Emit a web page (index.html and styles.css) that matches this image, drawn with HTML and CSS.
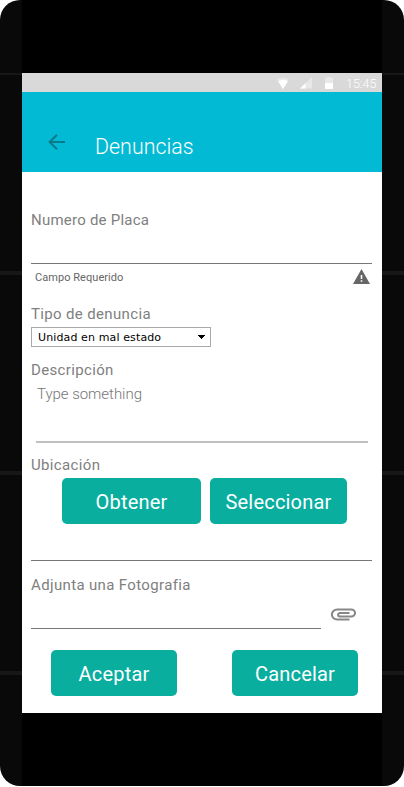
FILE: index.html
```html
<!DOCTYPE html>
<html lang="es">
<head>
<meta charset="utf-8">
<title>Denuncias</title>
<link rel="stylesheet" href="styles.css">
</head>
<body>
<div class="phone">
  <main class="screen">
    <div class="status">
      <svg class="wifi" width="12" height="12" viewBox="0 0 12 12"><path fill="#e8e8e8" d="M0 2.5Q6-1.2 12 2.5L6 12Z"/><path fill="#fff" d="M1.2 4.2Q6 1.8 10.8 4.2L6 12Z"/></svg>
      <svg class="signal" width="12" height="12" viewBox="0 0 12 12"><path fill="#e8e8e8" d="M12 0V11.5H0Z"/><path fill="#fff" d="M5.5 6V11.5H0Z"/></svg>
      <svg class="battery" width="8" height="12" viewBox="0 0 8 12"><path fill="#e8e8e8" d="M0 1H2V0H6V1H8V6H0Z"/><path fill="#fff" d="M0 6H8V12H0Z"/></svg>
      <span class="time">15:45</span>
    </div>
    <header class="bar">
      <svg class="back" width="17" height="16" viewBox="0 0 17 16"><path d="M17 8H1.5M9 .8L1.6 8L9 15.2" fill="none" stroke="#087b8c" stroke-width="2"/></svg>
      <h1 class="title">Denuncias</h1>
    </header>
    <form class="form">
      <label class="label plate">Numero de Placa</label>
      <div class="line plate-line"></div>
      <div class="helper"><span>Campo Requerido</span>
        <svg width="17" height="15" viewBox="0 0 17 15"><path fill="#666" fill-rule="evenodd" d="M8.5 0L17 15H0ZM7.7 6V10H9.3V6ZM7.7 11.3V12.8H9.3V11.3Z"/></svg>
      </div>
      <label class="label type">Tipo de denuncia</label>
      <div class="select"><span>Unidad en mal estado</span>
        <svg width="7" height="4" viewBox="0 0 7 4" shape-rendering="crispEdges"><path d="M0 0H7V1H6V2H5V3H4V4H3V3H2V2H1V1H0Z"/></svg>
      </div>
      <label class="label desc">Descripción</label>
      <div class="textarea">Type something</div>
      <label class="label place">Ubicación</label>
      <div class="actions locate"><button type="button" class="btn get">Obtener</button><button type="button" class="btn pick">Seleccionar</button></div>
      <div class="line place-line"></div>
      <label class="label photo">Adjunta una Fotografia</label>
      <div class="attach"><div class="file"></div>
        <svg width="25" height="13" viewBox="0 0 25 13"><path d="M18.5 11H6.2A4.8 4.5 0 0 1 6.2 1H20.2A3.6 3.3 0 0 1 20.2 8H8.8A1.7 1.7 0 0 1 8.8 4.6H18.5" transform="translate(0 .5)" fill="none" stroke="#878787" stroke-width="2"/></svg>
      </div>
      <div class="actions submit"><button type="button" class="btn ok">Aceptar</button><button type="button" class="btn cancel">Cancelar</button></div>
    </form>
  </main>
</div>
</body>
</html>
```

FILE: styles.css
```css
* { box-sizing: border-box; }
body { margin: 0; background: #fff; font-family: Roboto, sans-serif; }
.phone {
  width: 404px; height: 786px; padding: 73px 22px; border-radius: 20px;
  background:
    linear-gradient(#000, #000) 22px 0 / 360px 786px no-repeat,
    linear-gradient(#171717, #171717) 0 73px / 404px 2px no-repeat,
    linear-gradient(#171717, #171717) 0 271px / 404px 4px no-repeat,
    linear-gradient(#171717, #171717) 0 471px / 404px 4px no-repeat,
    linear-gradient(#171717, #171717) 0 671px / 404px 4px no-repeat,
    #090909;
}
.screen { width: 360px; height: 640px; background: #fff; overflow: hidden; }
svg { display: block; flex: none; }
.status { display: flex; height: 19px; padding: 4px 5px 0 0; justify-content: flex-end; background: #d9d9d9; }
.signal { margin-left: 11px; }
.battery { margin-left: 13px; }
.time { width: 31px; margin-left: 13px; color: #fff; font-size: 12.5px; font-weight: 300; line-height: 14px; letter-spacing: 0; white-space: nowrap; }
.bar { display: flex; height: 80px; padding: 42px 0 0 26px; background: #03bad4; }
.title { margin: 0 0 0 30px; color: #fff; font-size: 21.33px; font-weight: 300; line-height: 26px; letter-spacing: .05px; }
.form { display: flex; flex-direction: column; align-items: flex-start; padding: 36px 0 0 9px; }
.label { height: 24px; color: #808080; font-size: 15px; line-height: 24px; letter-spacing: .35px; white-space: nowrap; }
.plate { letter-spacing: .23px; }
.line { width: 341px; height: 1px; background: #777; }
.plate-line { margin-top: 31px; }
.helper { display: flex; width: 341px; height: 20px; margin-top: 4px; padding: 1px 2px 0 4px; justify-content: space-between; color: #666; font-size: 11px; line-height: 18px; letter-spacing: .05px; }
.type { margin-top: 14px; }
.select { display: flex; width: 180px; height: 20px; margin-top: 1px; padding: 0 5px 0 6px; align-items: center; justify-content: space-between; border: 1px solid #aaa; color: #000; font: 11px "DejaVu Sans", sans-serif; letter-spacing: .12px; white-space: nowrap; }
.desc { margin-top: 11px; }
.textarea { width: 332px; height: 61px; margin-left: 5px; padding-left: 1px; border-bottom: 2px solid #c0c0c0; color: #757575; font-size: 15px; font-weight: 300; line-height: 24px; letter-spacing: -.03px; }
.place { margin-top: 10px; }
.actions { display: flex; height: 46px; }
.locate { margin: 1px 0 0 31px; gap: 9px; }
.btn { height: 46px; padding: 2px 0 0; border: 0; border-radius: 5px; background: #09ae9f; color: #fff; font: 20px/44px Roboto, sans-serif; letter-spacing: .2px; white-space: nowrap; }
.get { width: 139px; }
.pick { width: 137px; }
.place-line { margin-top: 36px; }
.photo { margin-top: 12px; }
.attach { display: flex; height: 32px; gap: 10px; align-items: flex-start; }
.attach svg { margin-top: 11px; }
.file { width: 290px; height: 32px; border-bottom: 1px solid #777; }
.submit { margin: 21px 0 0 20px; gap: 55px; }
.ok, .cancel { width: 126px; }
```
